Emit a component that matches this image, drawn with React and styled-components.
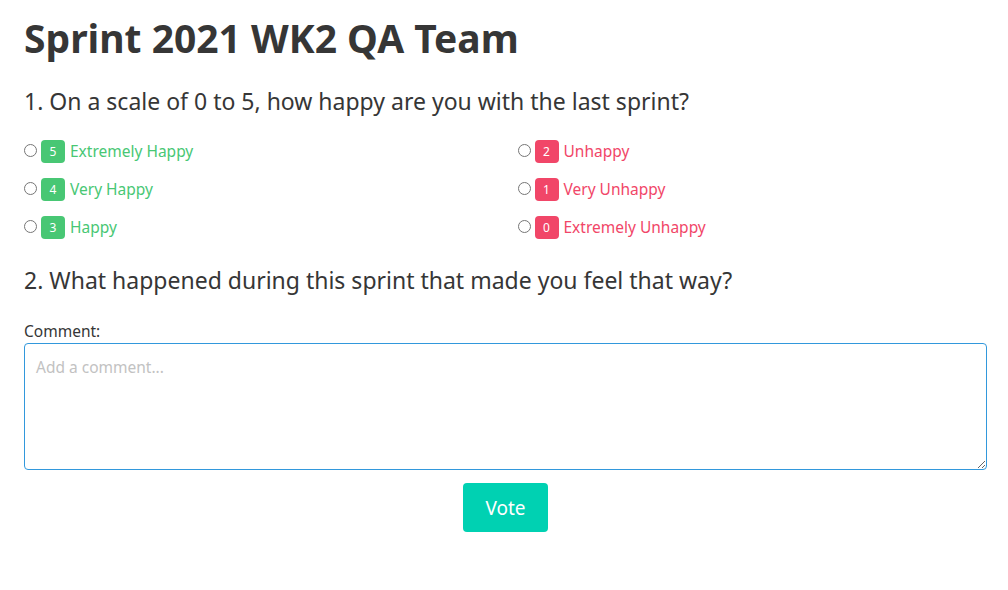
import React from 'react';
import styled, { createGlobalStyle } from 'styled-components';

const GlobalStyle = createGlobalStyle`
  body {
    margin: 0;
    background: #fff;
    font-family: 'Noto Sans', 'Open Sans', sans-serif;
    color: #363636;
  }
`;

const Page = styled.div`
  padding: 14px 21px 0 24px;
`;

const Title = styled.h1`
  margin: 0;
  font-size: 39px;
  line-height: 48px;
  font-weight: 700;
  color: #363636;
`;

const Question = styled.h2`
  margin: ${(p) => p.$top}px 0 0;
  font-size: 23px;
  line-height: 30px;
  font-weight: 400;
  color: #363636;
`;

const Options = styled.div`
  display: grid;
  grid-template-columns: 1fr 1fr;
  grid-auto-flow: column;
  grid-template-rows: repeat(3, 38px);
  column-gap: 24px;
  margin-top: 16px;
`;

const Option = styled.label`
  display: flex;
  align-items: center;
  font-size: 15.5px;
  color: ${(p) => (p.$good ? '#48c774' : '#f14668')};
  cursor: pointer;

  input {
    margin: 0 4px 0 0;
    width: 13px;
    height: 13px;
    position: relative;
    top: -1px;
  }
`;

const Tag = styled.span`
  display: inline-flex;
  align-items: center;
  justify-content: center;
  width: 24px;
  height: 23px;
  margin-right: 5px;
  border-radius: 4px;
  background: ${(p) => (p.$good ? '#48c774' : '#f14668')};
  color: #fff;
  font-size: 12px;
`;

const Label = styled.div`
  margin-top: 26px;
  font-size: 15.5px;
  line-height: 20px;
  color: #363636;
`;

const Comment = styled.textarea`
  display: block;
  box-sizing: border-box;
  width: 100%;
  height: 127px;
  margin-top: 2px;
  padding: 11px 11px;
  border: 1px solid #3298dc;
  border-radius: 4px;
  font-family: inherit;
  font-size: 15.5px;
  line-height: 24px;
  color: #363636;
  outline: none;

  &::placeholder {
    color: #c2c2c2;
  }
`;

const Actions = styled.div`
  display: flex;
  justify-content: center;
  margin-top: 13px;
`;

const VoteButton = styled.button`
  width: 85px;
  height: 49px;
  border: none;
  border-radius: 4px;
  background: #00d1b2;
  color: #fff;
  font-family: inherit;
  font-size: 19px;
  cursor: pointer;
`;

const options = [
  { value: 5, text: 'Extremely Happy', good: true },
  { value: 4, text: 'Very Happy', good: true },
  { value: 3, text: 'Happy', good: true },
  { value: 2, text: 'Unhappy', good: false },
  { value: 1, text: 'Very Unhappy', good: false },
  { value: 0, text: 'Extremely Unhappy', good: false },
];

export default function App() {
  return (
    <Page>
      <GlobalStyle />
      <Title>Sprint 2021 WK2 QA Team</Title>
      <Question $top={24}>1. On a scale of 0 to 5, how happy are you with the last sprint?</Question>
      <Options>
        {options.map((o) => (
          <Option key={o.value} $good={o.good}>
            <input type="radio" name="happiness" value={o.value} />
            <Tag $good={o.good}>{o.value}</Tag>
            {o.text}
          </Option>
        ))}
      </Options>
      <Question $top={19}>2. What happened during this sprint that made you feel that way?</Question>
      <Label>Comment:</Label>
      <Comment placeholder="Add a comment..." />
      <Actions>
        <VoteButton>Vote</VoteButton>
      </Actions>
    </Page>
  );
}
